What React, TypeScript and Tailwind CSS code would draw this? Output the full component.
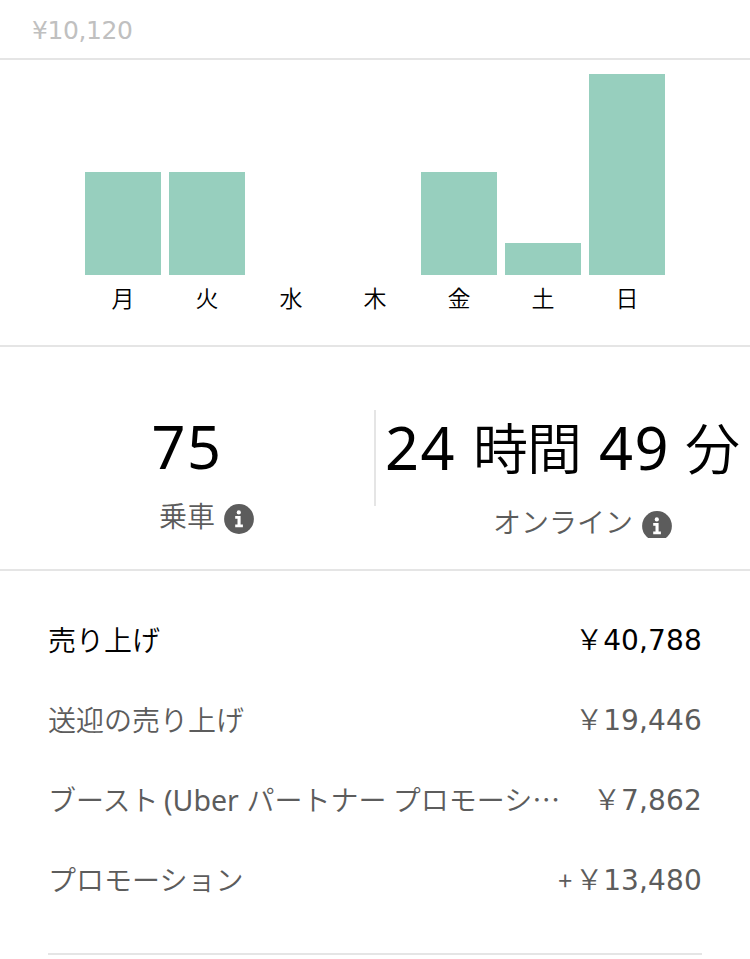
const days = [
  { label: "月", height: 103 },
  { label: "火", height: 103 },
  { label: "水", height: 0 },
  { label: "木", height: 0 },
  { label: "金", height: 103 },
  { label: "土", height: 32 },
  { label: "日", height: 201 },
];

const earnings = [
  { label: "売り上げ", sign: "", amount: "40,788", color: "text-black" },
  { label: "送迎の売り上げ", sign: "", amount: "19,446", color: "text-[#5c5c5c]" },
  { label: "boost", sign: "", amount: "7,862", color: "text-[#5c5c5c]" },
  { label: "プロモーション", sign: "+", amount: "13,480", color: "text-[#5c5c5c]" },
];

function InfoIcon() {
  return (
    <svg viewBox="0 0 30 30" className="h-[30px] w-[30px] shrink-0">
      <circle cx="15" cy="15" r="14.9" fill="#5c5c5c" />
      <circle cx="14.8" cy="8.4" r="2.1" fill="#fff" />
      <path d="M11.2 12h5.4v8.5h2.3v2.7h-7.7v-2.7h2.3v-5.8h-2.3z" fill="#fff" />
    </svg>
  );
}

function BoostLabel() {
  return (
    <>
      ブースト<span className="-ml-0.5 inline-block w-[90px] font-['Noto_Sans'] text-[28.5px] leading-8 font-normal">&nbsp;(Uber</span>パートナー プロモーシ…
    </>
  );
}

export default function App() {
  return (
    <div
      lang="ja"
      className="h-[959px] w-[750px] overflow-hidden bg-white font-['Noto_Sans_CJK_JP',sans-serif] font-[350] text-black"
    >
      <div className="flex h-[60px] items-center border-b-2 border-[#e5e5e5] px-8 pt-[3px] font-['DejaVu_Sans',sans-serif] text-[25px] tracking-[-0.4px] text-[#c0c0c0] font-normal">
        ¥10,120
      </div>

      <div className="h-[287px] border-b-2 border-[#e5e5e5] px-[85px] pt-3.5">
        <div className="flex h-[201px] items-end gap-2">
          {days.map((day) => (
            <div key={day.label} className="w-[76px] bg-[#97cfbe]" style={{ height: day.height }} />
          ))}
        </div>
        <div className="mt-1.5 flex gap-2 text-center text-[23px] leading-8">
          {days.map((day) => (
            <span key={day.label} className="w-[76px]">{day.label}</span>
          ))}
        </div>
      </div>

      <div className="flex h-[224px] border-b-2 border-[#e5e5e5] pt-[63px]">
        <div className="w-[374px]">
          <p className="-mt-0.5 h-[78px] text-center font-['Noto_Sans',sans-serif] text-[59.5px] leading-[76px] tracking-[1.5px] font-normal">75</p>
          <div className="mt-[18px] flex pl-[159px] text-[#5c5c5c]">
            <span className="-mt-[3px] w-[65px] text-[28px] leading-[28px]">乗車</span>
            <InfoIcon />
          </div>
        </div>
        <div className="h-24 w-0.5 bg-[#e5e5e5]" />
        <div className="flex-1">
          <div className="-mt-[3px] flex h-[79px] items-baseline pl-[9px] text-[55px] leading-[76px] whitespace-nowrap">
            <span className="relative top-px w-[88px] font-['Noto_Sans',sans-serif] text-[59.5px] tracking-[1.5px] font-normal">24</span>
            <span className="w-[126px] tracking-[-1px]">時間</span>
            <span className="relative top-px w-[86px] font-['Noto_Sans',sans-serif] text-[59.5px] tracking-[1.5px] font-normal">49</span>
            <span>分</span>
          </div>
          <div className="mt-[19px] flex pl-[117px] text-[#5c5c5c]">
            <span className="w-[149px] text-[28px] leading-[33px]">オンライン</span>
            <span className="mt-[6px] h-[27px] overflow-hidden">
              <InfoIcon />
            </span>
          </div>
        </div>
      </div>

      <div className="mx-12 h-[384px] border-b-2 border-[#e5e5e5] pt-7 text-[28px]">
        {earnings.map((row) => (
          <div key={row.label} className={`flex h-20 items-center justify-between whitespace-nowrap ${row.color}`}>
            <span>{row.label === "boost" ? <BoostLabel /> : row.label}</span>
            <span className="flex items-baseline pb-0.5">
              <span className="mr-[3px] text-[25px] leading-8 font-normal">{row.sign}</span>
              <span className="w-[28px]">￥</span>
              <span className="font-['DejaVu_Sans',sans-serif] leading-8 font-normal tracking-[0.15px]">{row.amount}</span>
            </span>
          </div>
        ))}
      </div>
    </div>
  );
}
